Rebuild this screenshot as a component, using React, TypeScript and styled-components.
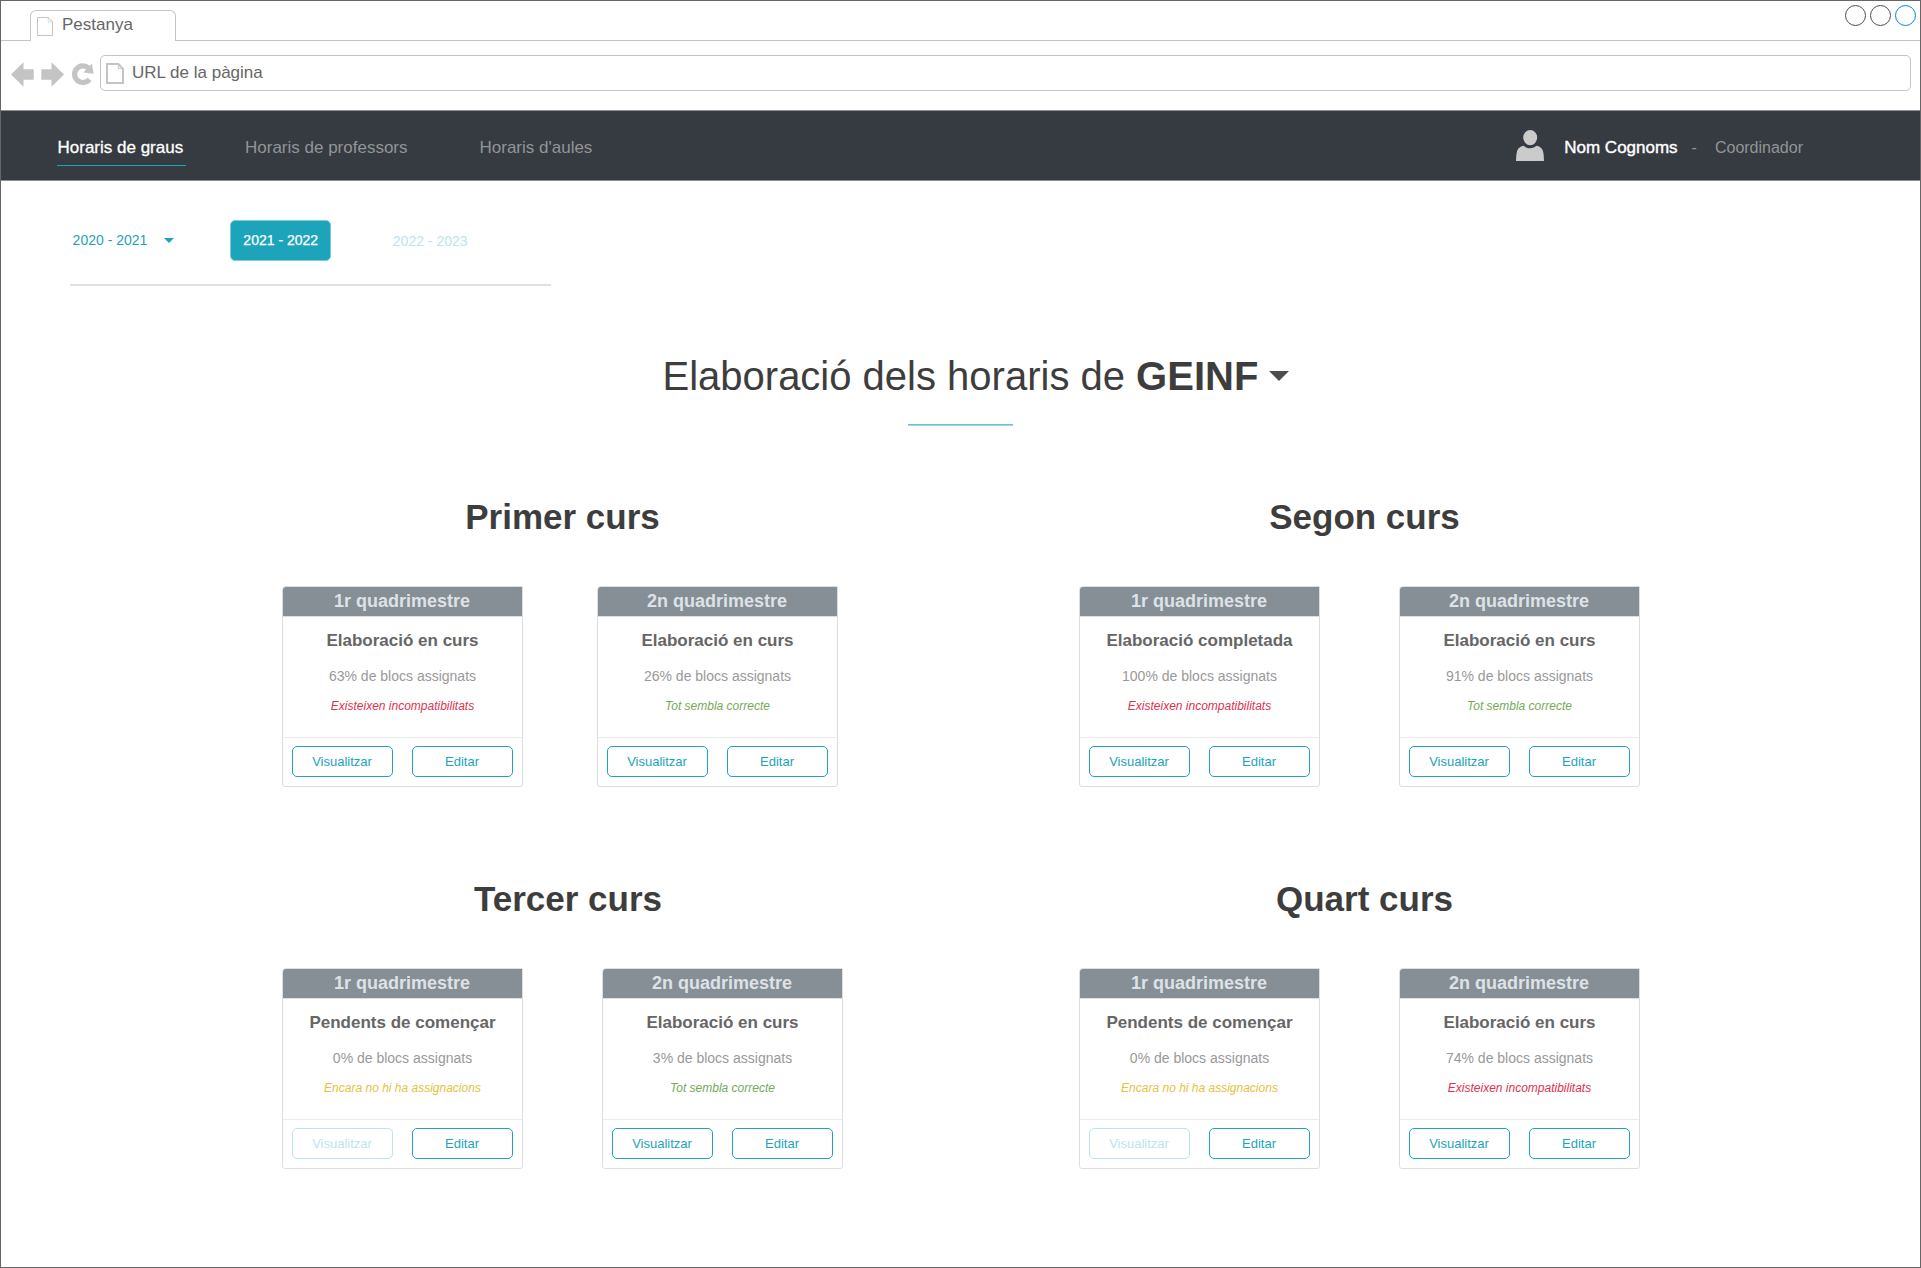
import React from 'react';
import styled, { createGlobalStyle, css } from 'styled-components';

const teal = '#1ca4ba';
const tealFaded = '#bbe5eb';

const GlobalStyle = createGlobalStyle`
  * { box-sizing: border-box; }
  body {
    margin: 0;
    background: #fff;
    font-family: "Liberation Sans", Arial, sans-serif;
  }
  h1, h2, h3, p { margin: 0; }
  svg { display: block; flex: none; }
`;

const Window = styled.div`
  width: 1921px;
  height: 1268px;
  border: 1px solid #666;
  display: flex;
  flex-direction: column;
  overflow: hidden;
`;

/* Browser chrome */

const TabStrip = styled.div`
  display: flex;
  height: 40px;
  flex: none;
`;

const StripEdge = styled.div`
  width: 29px;
  border-bottom: 1px solid #c4c4c4;
`;

const Tab = styled.div`
  width: 146px;
  margin-top: 9px;
  padding: 6px 0 0 6px;
  display: flex;
  gap: 9px;
  border: 1px solid #c4c4c4;
  border-bottom: none;
  border-radius: 6px 6px 0 0;
  color: #666;
  font-size: 17px;
  line-height: 20px;
`;

const TabTitle = styled.span`
  margin-top: -2px;
`;

const StripRest = styled.div`
  flex: 1;
  display: flex;
  justify-content: flex-end;
  gap: 4px;
  padding: 4px 4px 0 0;
  border-bottom: 1px solid #c4c4c4;
`;

const WindowDot = styled.span<{ $active?: boolean }>`
  width: 21px;
  height: 21px;
  border-radius: 50%;
  border: 1.2px solid ${(p) => (p.$active ? '#0080ff' : '#4d4d4d')};
`;

const Toolbar = styled.div`
  display: flex;
  align-items: flex-start;
  height: 69px;
  flex: none;
  padding: 14px 9px 0 10px;
`;

const ToolbarIcons = styled.div`
  display: flex;
  align-items: center;
  gap: 7px;
  width: 89px;
  padding-top: 7px;
`;

const UrlBar = styled.div`
  flex: 1;
  display: flex;
  gap: 8px;
  height: 36px;
  padding: 7px 5px;
  border: 1px solid #c4c4c4;
  border-radius: 5px;
  color: #666;
  font-size: 17px;
  line-height: 20px;
`;

const UrlText = styled.span``;

/* Application header */

const Navbar = styled.header`
  display: flex;
  flex: none;
  height: 71px;
  padding: 27px 117px 0 56px;
  background: #363a41;
  border: solid #8b8e90;
  border-width: 1px 0;
  font-size: 17px;
  line-height: 20px;
`;

const NavLinks = styled.nav`
  display: flex;
  align-items: flex-start;
`;

const NavLink = styled.a<{ $active?: boolean }>`
  color: #929598;
  white-space: nowrap;
  ${(p) =>
    p.$active &&
    css`
      width: 129px;
      padding: 0 0 7px 0.5px;
      border-bottom: 1px solid ${teal};
      color: #fff;
      -webkit-text-stroke: 0.3px #fff;
    `}
  & + & { margin-left: 59px; }
  & + & + & { margin-left: 72px; }
`;

const UserArea = styled.div`
  display: flex;
  align-items: flex-start;
  margin-left: auto;
  color: #929598;
  font-size: 16px;

  svg { margin-top: -8px; }
`;

const UserName = styled.span`
  margin-left: 20px;
  color: #fff;
  font-size: 17px;
  -webkit-text-stroke: 0.4px #fff;
`;

const Dash = styled.span`
  margin: 0 18px 0 14px;
`;

/* Year selector */

const YearBar = styled.div`
  display: flex;
  flex: none;
  align-items: flex-start;
  width: 481px;
  height: 105px;
  margin-left: 69px;
  padding-top: 39px;
  border-bottom: 2px solid #e0e0e0;
  font-size: 14px;
  line-height: 16px;
`;

const Year = styled.span<{ $faded?: boolean }>`
  display: flex;
  align-items: center;
  gap: 17px;
  height: 40px;
  padding-left: 2.6px;
  color: ${(p) => (p.$faded ? tealFaded : teal)};
  ${(p) => p.$faded && 'height: 42px; margin-left: 59.5px;'}
`;

const CurrentYear = styled.button`
  width: 101px;
  height: 41px;
  margin-left: 55.4px;
  padding: 0 0 2px 1px;
  border: 1px solid #7fcbd7;
  border-radius: 5px;
  background: ${teal};
  color: #fff;
  font: inherit;
  -webkit-text-stroke: 0.25px #fff;
`;

/* Title */

const Title = styled.h1`
  display: flex;
  flex: none;
  align-items: center;
  height: 46px;
  margin: 67px 0 0 661.5px;
  color: #3d3d3d;
  font-size: 40px;
  font-weight: 400;
  line-height: 46px;
  white-space: pre;

  svg { margin: 0 0 0 11px; }
`;

const TitleRule = styled.div`
  flex: none;
  width: 105px;
  height: 2px;
  margin: 25px 0 0 907px;
  background: linear-gradient(#66c4d2 50%, #9bdae3 50%);
`;

/* Course grid */

const Courses = styled.main`
  display: grid;
  grid-template-columns: 561px 561px;
  grid-auto-rows: 382px;
  column-gap: 236px;
  padding: 71px 0 0 281px;
`;

const CourseSection = styled.section`
  display: flex;
  flex-direction: column;
`;

const CourseTitle = styled.h2<{ $shift: number }>`
  width: 561px;
  padding-left: ${(p) => p.$shift}px;
  color: #3d3d3d;
  font-size: 35px;
  line-height: 40px;
  text-align: center;
`;

const Terms = styled.div<{ $gap: number }>`
  display: flex;
  gap: ${(p) => p.$gap}px;
  margin-top: 49px;
`;

const Card = styled.article`
  width: 241px;
  height: 201px;
  display: flex;
  flex-direction: column;
  border: 1px solid #dedede;
  border-radius: 4px 0 3px 3px;
  text-align: center;
  overflow: hidden;
`;

const CardHeader = styled.h3`
  height: 30px;
  padding-right: 1px;
  border-bottom: 1px solid #dedede;
  background: #868e96;
  color: #dee2e6;
  font-size: 18px;
  line-height: 28px;
`;

const CardBody = styled.div`
  height: 121px;
  border-bottom: 1px solid #ebebeb;
`;

const Status = styled.p`
  padding-top: 14px;
  color: #666;
  font-size: 17px;
  font-weight: 700;
  line-height: 20px;
`;

const Progress = styled.p`
  padding-top: 17px;
  color: #999;
  font-size: 14px;
  line-height: 16px;
`;

type Tone = 'error' | 'ok' | 'pending';

const toneColor: Record<Tone, string> = {
  error: '#dc3350',
  ok: '#72aa55',
  pending: '#e6bf3c',
};

const Notice = styled.p<{ $tone: Tone }>`
  padding-top: 15px;
  color: ${(p) => toneColor[p.$tone]};
  font-size: 12px;
  font-style: italic;
  line-height: 14px;
`;

const CardActions = styled.div`
  display: flex;
  gap: 19px;
  padding: 8px 9px;
`;

const ActionButton = styled.button`
  width: 101px;
  height: 31px;
  padding: 0 1px 0 0;
  border: 1px solid ${teal};
  border-radius: 5px;
  background: #fff;
  color: ${teal};
  font: 13px/15px "Liberation Sans", Arial, sans-serif;

  &:disabled {
    border-color: ${tealFaded};
    color: ${tealFaded};
  }
`;

/* Icons */

const DocumentIcon = ({ bold }: { bold?: boolean }) =>
  bold ? (
    <svg width="18" height="21" viewBox="0 0 18 21" fill="none" stroke="#c4c4c4">
      <path d="M1 1H12.4L17 5.6V20H1Z" strokeWidth="2" />
      <path d="M12.4 1V5.6H17" />
    </svg>
  ) : (
    <svg width="16" height="19" viewBox="0 0 16 19" fill="none" stroke="#c4c4c4">
      <path d="M.5 .5H11.3L15.5 4.9V18.5H.5Z" />
      <path d="M11.3 .5V4.9H15.5" strokeWidth="0.6" />
    </svg>
  );

const ArrowIcon = ({ forward }: { forward?: boolean }) => (
  <svg width="23" height="25" viewBox="0 0 23 25" fill="#c4c4c4">
    <path
      d="M0 12.5L12.5 .3V7.3H22.7V17.7H12.5V24.7Z"
      transform={forward ? 'translate(23 0) scale(-1 1)' : undefined}
    />
  </svg>
);

const ReloadIcon = () => (
  <svg width="23" height="23" viewBox="0 0 23 23">
    <path d="M17.6 5.2A8.3 8.3 0 1 0 18.5 16.2" fill="none" stroke="#c4c4c4" strokeWidth="5.2" />
    <path d="M20.9 .6L22.6 10.8L12.4 9.4Z" fill="#c4c4c4" />
  </svg>
);

const UserIcon = () => (
  <svg width="28" height="31" viewBox="0 0 28 31" fill="#cbcbcb">
    <ellipse cx="14.2" cy="7.6" rx="7" ry="7.6" />
    <path d="M0 31C.1 25 .6 20.6 2.4 18.4C3.8 16.8 6.3 16 7.8 15.7C11 19 17.3 19 20.4 15.7C22 16 24.3 16.8 25.6 18.4C27.5 20.6 27.9 25 28 31Z" />
  </svg>
);

const Caret = ({ width, height, color }: { width: number; height: number; color: string }) => (
  <svg width={width} height={height} viewBox="0 0 20 10" preserveAspectRatio="none">
    <path d="M0 0H20L10 10Z" fill={color} />
  </svg>
);

/* Data */

interface Term {
  name: string;
  status: string;
  percent: number;
  notice: string;
  tone: Tone;
}

interface Course {
  name: string;
  shift: number;
  gap: number;
  terms: Term[];
}

const inProgress = 'Elaboració en curs';
const pending = 'Pendents de començar';
const errors = { notice: 'Existeixen incompatibilitats', tone: 'error' as const };
const fine = { notice: 'Tot sembla correcte', tone: 'ok' as const };
const empty = { notice: 'Encara no hi ha assignacions', tone: 'pending' as const };
const first = '1r quadrimestre';
const second = '2n quadrimestre';

const courses: Course[] = [
  {
    name: 'Primer curs',
    shift: 0,
    gap: 74,
    terms: [
      { name: first, status: inProgress, percent: 63, ...errors },
      { name: second, status: inProgress, percent: 26, ...fine },
    ],
  },
  {
    name: 'Segon curs',
    shift: 10,
    gap: 79,
    terms: [
      { name: first, status: 'Elaboració completada', percent: 100, ...errors },
      { name: second, status: inProgress, percent: 91, ...fine },
    ],
  },
  {
    name: 'Tercer curs',
    shift: 11,
    gap: 79,
    terms: [
      { name: first, status: pending, percent: 0, ...empty },
      { name: second, status: inProgress, percent: 3, ...fine },
    ],
  },
  {
    name: 'Quart curs',
    shift: 10,
    gap: 79,
    terms: [
      { name: first, status: pending, percent: 0, ...empty },
      { name: second, status: inProgress, percent: 74, ...errors },
    ],
  },
];

const TermCard = ({ term }: { term: Term }) => (
  <Card>
    <CardHeader>{term.name}</CardHeader>
    <CardBody>
      <Status>{term.status}</Status>
      <Progress>{term.percent}% de blocs assignats</Progress>
      <Notice $tone={term.tone}>{term.notice}</Notice>
    </CardBody>
    <CardActions>
      <ActionButton disabled={term.percent === 0}>Visualitzar</ActionButton>
      <ActionButton>Editar</ActionButton>
    </CardActions>
  </Card>
);

export default function App() {
  return (
    <>
      <GlobalStyle />
      <Window>
        <TabStrip>
          <StripEdge />
          <Tab>
            <DocumentIcon />
            <TabTitle>Pestanya</TabTitle>
          </Tab>
          <StripRest>
            <WindowDot />
            <WindowDot />
            <WindowDot $active />
          </StripRest>
        </TabStrip>
        <Toolbar>
          <ToolbarIcons>
            <ArrowIcon />
            <ArrowIcon forward />
            <ReloadIcon />
          </ToolbarIcons>
          <UrlBar>
            <DocumentIcon bold />
            <UrlText>URL de la pàgina</UrlText>
          </UrlBar>
        </Toolbar>
        <Navbar>
          <NavLinks>
            <NavLink $active>Horaris de graus</NavLink>
            <NavLink>Horaris de professors</NavLink>
            <NavLink>Horaris d'aules</NavLink>
          </NavLinks>
          <UserArea>
            <UserIcon />
            <UserName>Nom Cognoms</UserName>
            <Dash>-</Dash>
            <span>Coordinador</span>
          </UserArea>
        </Navbar>
        <YearBar>
          <Year>
            2020 - 2021
            <Caret width={10} height={5} color={teal} />
          </Year>
          <CurrentYear>2021 - 2022</CurrentYear>
          <Year $faded>2022 - 2023</Year>
        </YearBar>
        <Title>
          Elaboració dels horaris de <b>GEINF</b>
          <Caret width={20} height={10} color="#4d4d4d" />
        </Title>
        <TitleRule />
        <Courses>
          {courses.map((course) => (
            <CourseSection key={course.name}>
              <CourseTitle $shift={course.shift}>{course.name}</CourseTitle>
              <Terms $gap={course.gap}>
                {course.terms.map((term) => (
                  <TermCard key={term.name} term={term} />
                ))}
              </Terms>
            </CourseSection>
          ))}
        </Courses>
      </Window>
    </>
  );
}
